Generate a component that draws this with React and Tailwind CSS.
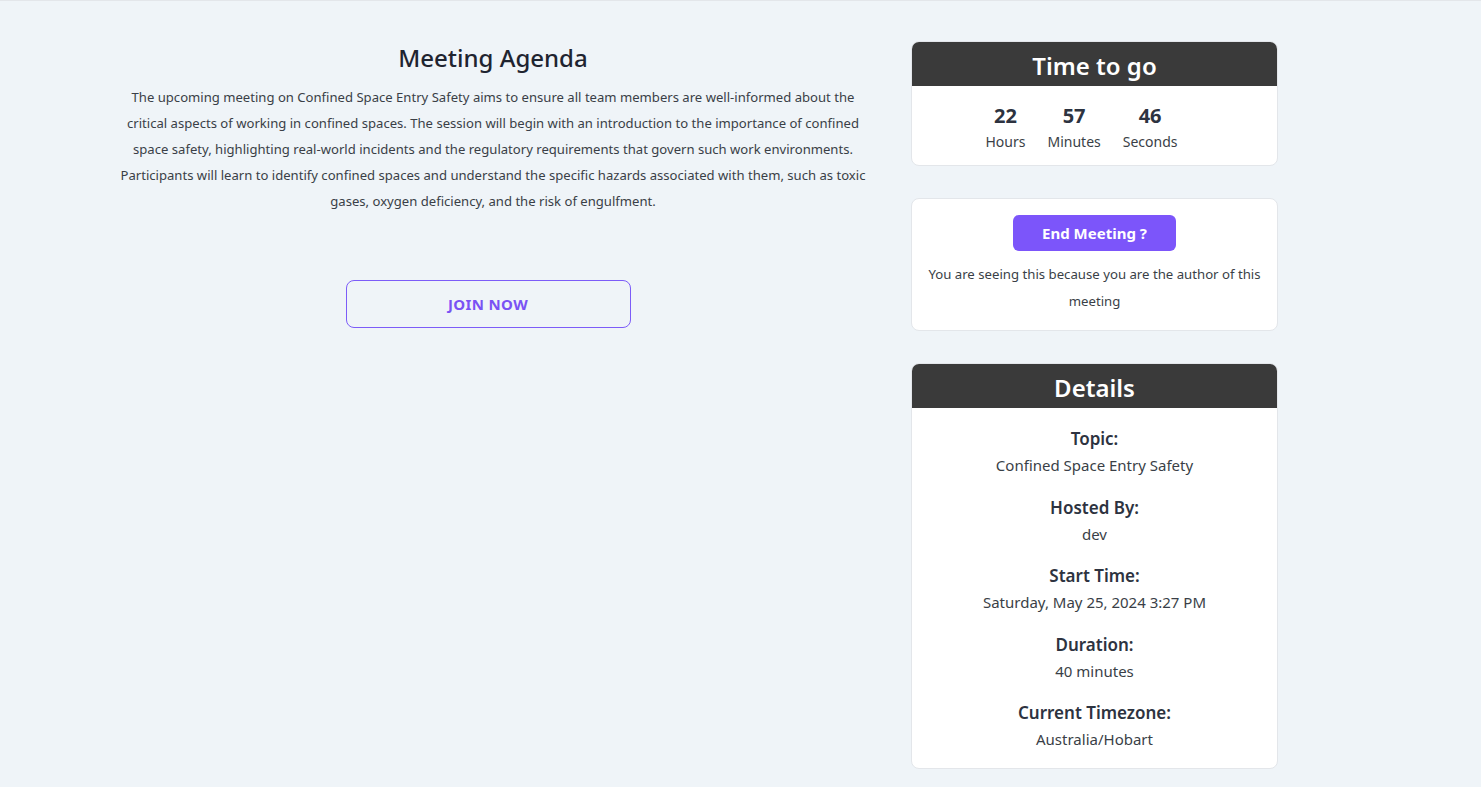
import React from 'react';

const details = [
  { label: 'Topic:', value: 'Confined Space Entry Safety' },
  { label: 'Hosted By:', value: 'dev' },
  { label: 'Start Time:', value: 'Saturday, May 25, 2024 3:27 PM' },
  { label: 'Duration:', value: '40 minutes' },
  { label: 'Current Timezone:', value: 'Australia/Hobart' },
];

const countdown = [
  { value: 22, label: 'Hours' },
  { value: 57, label: 'Minutes' },
  { value: 46, label: 'Seconds' },
];

const CardHeader = ({ children }) => (
  <div className="bg-[#3a3a3a] h-[44px] pt-[4px] flex items-center justify-center">
    <h2 className="text-white text-[24px] font-semibold leading-none">{children}</h2>
  </div>
);

export default function App() {
  return (
    <div
      className="min-h-screen bg-[#eff4f8] border-t border-[#e3e6ea] text-[#374151]"
      style={{ fontFamily: '"Noto Sans", "Open Sans", sans-serif' }}
    >
      <div className="flex gap-[35px] pl-[110px] pt-[40px] pb-[18px]">
        <div className="w-[766px] flex flex-col items-center">
          <h1 className="text-[24px] font-medium text-[#1f2430] leading-[34px]">Meeting Agenda</h1>
          <p className="mt-[9px] text-[13.1px] leading-[26px] text-center text-[#3a3f47]">
            The upcoming meeting on Confined Space Entry Safety aims to ensure all team members are well-informed about the
            <br />
            critical aspects of working in confined spaces. The session will begin with an introduction to the importance of confined
            <br />
            space safety, highlighting real-world incidents and the regulatory requirements that govern such work environments.
            <br />
            Participants will learn to identify confined spaces and understand the specific hazards associated with them, such as toxic
            <br />
            gases, oxygen deficiency, and the risk of engulfment.
          </p>
          <button className="mt-[66px] mr-[10px] w-[285px] h-[48px] border border-[#7c5cf8] rounded-lg text-[#7a52f4] text-[15px] font-bold tracking-wide">
            JOIN NOW
          </button>
        </div>

        <div className="w-[367px] flex flex-col gap-[32px]">
          <div className="bg-white rounded-lg border border-[#e3e6ea] overflow-hidden">
            <CardHeader>Time to go</CardHeader>
            <div className="flex justify-center gap-[22px] pt-[16px] pb-[11px] pr-[26px]">
              {countdown.map((c) => (
                <div key={c.label} className="flex flex-col items-center">
                  <span className="text-[20px] font-bold leading-[28px] text-[#2d3340]">{c.value}</span>
                  <span className="text-[14px] leading-[24px] text-[#3a3f47]">{c.label}</span>
                </div>
              ))}
            </div>
          </div>

          <div className="bg-white rounded-lg border border-[#e3e6ea] px-3 pt-[16px] pb-[15px] flex flex-col items-center">
            <button className="bg-[#7c55fa] text-white text-[15px] font-bold rounded-md w-[163px] h-[36px]">
              End Meeting ?
            </button>
            <p className="mt-[10px] text-[13.2px] leading-[27px] text-center text-[#3a3f47]">
              You are seeing this because you are the author of this meeting
            </p>
          </div>

          <div className="bg-white rounded-lg border border-[#e3e6ea] overflow-hidden">
            <CardHeader>Details</CardHeader>
            <div className="flex flex-col gap-[16.5px] pt-[18px] pb-[16px] items-center">
              {details.map((d) => (
                <div key={d.label} className="flex flex-col items-center">
                  <span className="text-[17px] font-semibold leading-[26px] text-[#2d3340]">{d.label}</span>
                  <span className="text-[15px] leading-[26px] text-[#3a3f47]">{d.value}</span>
                </div>
              ))}
            </div>
          </div>
        </div>
      </div>
    </div>
  );
}
